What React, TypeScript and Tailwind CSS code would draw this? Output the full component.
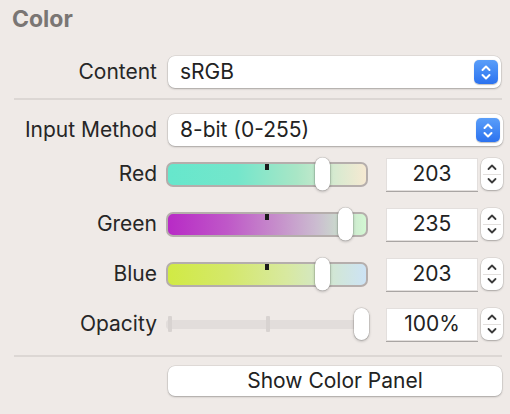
import React from "react";

const font = { fontFamily: 'Inter, "Liberation Sans", Arial, sans-serif' };

function BlueStepper() {
  return (
    <div className="w-[24px] h-[24px] rounded-[5px] bg-gradient-to-b from-[#5a9ef9] to-[#2c72ef] flex items-center justify-center shadow-[0_0.5px_1px_rgba(0,0,0,0.25)]">
      <svg width="12" height="17" viewBox="0 0 12 17" fill="none">
        <path d="M2.5 6 L6 2.5 L9.5 6" stroke="white" strokeWidth="2" strokeLinecap="round" strokeLinejoin="round" />
        <path d="M2.5 11 L6 14.5 L9.5 11" stroke="white" strokeWidth="2" strokeLinecap="round" strokeLinejoin="round" />
      </svg>
    </div>
  );
}

function Popup({ text, wide }: { text: string; wide?: boolean }) {
  return (
    <div
      className={`ml-[11px] h-[32px] ${wide ? "w-[335px]" : "w-[333px]"} bg-white rounded-[7px] shadow-[0_0_0_0.5px_rgba(0,0,0,0.12),0_1px_2px_rgba(0,0,0,0.25)] flex items-center justify-between pl-[12px] pr-[3px]`}
    >
      <span className="text-[21px] text-[#222]">{text}</span>
      <BlueStepper />
    </div>
  );
}

function SmallStepper() {
  return (
    <div className="ml-[3px] w-[22px] h-[32px] bg-white rounded-[7px] shadow-[0_0_0_0.5px_rgba(0,0,0,0.12),0_1px_2px_rgba(0,0,0,0.25)] flex flex-col items-center justify-center relative">
      <div className="absolute left-[2px] right-[2px] top-1/2 h-px bg-[#e2dfdd]" />
      <svg width="12" height="26" viewBox="0 0 12 26" fill="none">
        <path d="M2.5 8 L6 4.5 L9.5 8" stroke="#3a3a3a" strokeWidth="1.8" strokeLinecap="round" strokeLinejoin="round" />
        <path d="M2.5 18 L6 21.5 L9.5 18" stroke="#3a3a3a" strokeWidth="1.8" strokeLinecap="round" strokeLinejoin="round" />
      </svg>
    </div>
  );
}

function Field({ value }: { value: string }) {
  return (
    <div className="ml-[18px] w-[92px] h-[33px] bg-white border border-[#e3dfdd] shadow-[0_1px_0_#a9a5a3] flex items-center justify-center text-[21px] text-[#222]">
      {value}
    </div>
  );
}

function Thumb({ center, h }: { center: number; h: number }) {
  return (
    <div
      className="absolute top-1/2 -translate-y-1/2 w-[15px] rounded-full bg-white shadow-[0_0_0_0.5px_rgba(0,0,0,0.15),0_1px_3px_rgba(0,0,0,0.3)]"
      style={{ left: center - 7.5, height: h }}
    />
  );
}

function ColorSlider({ value, gradient }: { value: number; gradient: string }) {
  const center = 7.5 + (value / 255) * 187;
  return (
    <div className="relative w-[202px] h-[34px] flex items-center">
      <div
        className="relative w-full h-[25px] rounded-[7px] border-2 border-[#b5aeac]"
        style={{ background: gradient }}
      >
        <div className="absolute left-[97px] top-0 w-[4px] h-[6px] bg-[#1a1a1a]" />
      </div>
      <Thumb center={center} h={33} />
    </div>
  );
}

function OpacitySlider() {
  return (
    <div className="relative w-[202px] h-[34px] flex items-center">
      <div className="relative w-full h-[9px] rounded-[3px] bg-[#e2dddb]" />
      <div className="absolute left-[2px] top-[9px] w-[4px] h-[16px] rounded-[1px] bg-[#d8d3d1]" />
      <div className="absolute left-[100px] top-[9px] w-[4px] h-[16px] rounded-[1px] bg-[#d8d3d1]" />
      <Thumb center={195.5} h={32} />
    </div>
  );
}

function Label({ children }: { children: React.ReactNode }) {
  return <div className="w-[157px] text-right text-[21px] text-[#262626] whitespace-nowrap">{children}</div>;
}

function SliderRow({ label, children, value }: { label: string; children: React.ReactNode; value: string }) {
  return (
    <div className="flex items-center h-[34px]">
      <Label>{label}</Label>
      <div className="ml-[9px]">{children}</div>
      <Field value={value} />
      <SmallStepper />
    </div>
  );
}

export default function App() {
  return (
    <div className="w-[510px] h-[414px] bg-[#efeae7] overflow-hidden flex flex-col" style={font}>
      <div className="pl-[12px] pt-[5px] h-[33px] leading-[28px] text-[23px] font-bold text-[#7a7674]">Color</div>

      <div className="mt-[23px] flex items-center h-[32px]">
        <Label>Content</Label>
        <Popup text="sRGB" />
      </div>

      <div className="mt-[10px] ml-[14px] w-[488px] h-[2px] bg-[#dcd7d4]" />

      <div className="mt-[14px] flex items-center h-[32px]">
        <Label>Input Method</Label>
        <Popup text="8-bit (0-255)" wide />
      </div>

      <div className="mt-[11px] flex flex-col gap-[16px]">
        <SliderRow label="Red" value="203">
          <ColorSlider
            value={203}
            gradient="linear-gradient(to right, #66e7cc 0%, #74e6cb 35%, #a9e6c6 65%, #d8ead0 85%, #f6e9d2 100%)"
          />
        </SliderRow>
        <SliderRow label="Green" value="235">
          <ColorSlider
            value={235}
            gradient="linear-gradient(to right, #b82ac6 0%, #bf58c8 30%, #c68ecb 55%, #cbbcd0 75%, #cadfcc 88%, #d3f8d3 100%)"
          />
        </SliderRow>
        <SliderRow label="Blue" value="203">
          <ColorSlider
            value={203}
            gradient="linear-gradient(to right, #d1ea44 0%, #d4e86a 30%, #d8e9a0 60%, #d2e7d2 82%, #cde3f5 100%)"
          />
        </SliderRow>
        <SliderRow label="Opacity" value="100%">
          <OpacitySlider />
        </SliderRow>
      </div>

      <div className="mt-[14px] ml-[14px] w-[488px] h-[2px] bg-[#dcd7d4]" />

      <div className="mt-[9px] ml-[168px] w-[334px] h-[30px] bg-white rounded-[7px] shadow-[0_0_0_0.5px_rgba(0,0,0,0.12),0_1px_2px_rgba(0,0,0,0.25)] flex items-center justify-center text-[21px] text-[#222]">
        Show Color Panel
      </div>
    </div>
  );
}
